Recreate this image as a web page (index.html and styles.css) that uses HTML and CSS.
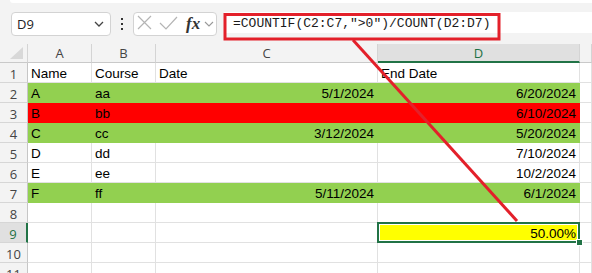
FILE: index.html
```html
<!DOCTYPE html>
<html>
<head>
    <title>Sheet</title>
    <link rel="stylesheet" href="styles.css">
</head>
<body>
    <div class="ribbon-edge"></div>
    <div class="formula-row">
        <div class="name-box">
            <span>D9</span>
            <svg class="chev" width="10" height="6" viewBox="0 0 10 6"><polyline points="1,1 5,5 9,1" /></svg>
        </div>
        <div class="dots">
            <svg width="4" height="14" viewBox="0 0 4 14"><rect x="1" y="1" width="2" height="2"/><rect x="1" y="6" width="2" height="2"/><rect x="1" y="11" width="2" height="2"/></svg>
        </div>
        <div class="fx-box">
            <svg class="edit-icons" width="48" height="22" viewBox="0 0 48 22">
                <path d="M4 3 L17 16 M17 3 L4 16" />
                <path d="M26 10 L32 16 L43 4" />
            </svg>
            <span class="fx">fx</span>
            <svg class="chev small" width="10" height="6" viewBox="0 0 10 6"><polyline points="1,1 5,5 9,1" /></svg>
        </div>
        <div class="formula">=COUNTIF(C2:C7,"&gt;0")/COUNT(D2:D7)</div>
    </div>

    <div class="sheet">
        <div class="hd corner">
            <svg width="14" height="13" viewBox="0 0 14 13"><polygon points="13,0 13,12 0,12" /></svg>
        </div>
        <div class="hd">A</div>
        <div class="hd">B</div>
        <div class="hd">C</div>
        <div class="hd sel">D</div>
        <div class="hd"></div>

        <div class="rh">1</div>
        <div class="cell">Name</div>
        <div class="cell">Course</div>
        <div class="cell">Date</div>
        <div class="cell">End Date</div>
        <div class="cell"></div>

        <div class="rh">2</div>
        <div class="cell g">A</div>
        <div class="cell g">aa</div>
        <div class="cell g num">5/1/2024</div>
        <div class="cell g num">6/20/2024</div>
        <div class="cell"></div>

        <div class="rh">3</div>
        <div class="cell r">B</div>
        <div class="cell r">bb</div>
        <div class="cell r num"></div>
        <div class="cell r num">6/10/2024</div>
        <div class="cell"></div>

        <div class="rh">4</div>
        <div class="cell g">C</div>
        <div class="cell g">cc</div>
        <div class="cell g num">3/12/2024</div>
        <div class="cell g num">5/20/2024</div>
        <div class="cell"></div>

        <div class="rh">5</div>
        <div class="cell">D</div>
        <div class="cell">dd</div>
        <div class="cell num"></div>
        <div class="cell num">7/10/2024</div>
        <div class="cell"></div>

        <div class="rh">6</div>
        <div class="cell">E</div>
        <div class="cell">ee</div>
        <div class="cell num"></div>
        <div class="cell num">10/2/2024</div>
        <div class="cell"></div>

        <div class="rh">7</div>
        <div class="cell g">F</div>
        <div class="cell g">ff</div>
        <div class="cell g num">5/11/2024</div>
        <div class="cell g num">6/1/2024</div>
        <div class="cell"></div>

        <div class="rh">8</div>
        <div class="cell"></div>
        <div class="cell"></div>
        <div class="cell"></div>
        <div class="cell"></div>
        <div class="cell"></div>

        <div class="rh sel">9</div>
        <div class="cell"></div>
        <div class="cell"></div>
        <div class="cell"></div>
        <div class="cell num active">50.00%</div>
        <div class="cell"></div>

        <div class="rh">10</div>
        <div class="cell"></div>
        <div class="cell"></div>
        <div class="cell"></div>
        <div class="cell"></div>
        <div class="cell"></div>

        <div class="rh">11</div>
        <div class="cell"></div>
        <div class="cell"></div>
        <div class="cell"></div>
        <div class="cell"></div>
        <div class="cell"></div>
    </div>

    <!-- annotation drawn over the sheet -->
    <svg class="callout" width="592" height="273" viewBox="0 0 592 273">
        <rect x="225" y="14.5" width="274" height="24.5" />
        <line x1="353" y1="40" x2="517" y2="221" />
    </svg>
</body>
</html>
```

FILE: styles.css
```css
body {
    margin: 0;
    width: 592px;
    height: 273px;
    overflow: hidden;
    background: #f3f3f3;
    font-family: "Open Sans", sans-serif;
    position: relative;
}
.ribbon-edge {
    height: 3px;
    margin-left: 10px;
    background: #fff;
    border-bottom-left-radius: 4px;
}
.formula-row {
    display: flex;
    align-items: flex-start;
    padding-top: 9px;
    height: 24px;
}
.name-box {
    box-sizing: border-box;
    margin-left: 11px;
    width: 100px;
    height: 24px;
    background: #fff;
    border: 1px solid #d3d3d3;
    border-radius: 4px;
    display: flex;
    align-items: center;
    justify-content: space-between;
    padding: 0 6px 0 5px;
    font-size: 13px;
    color: #222;
}
.chev polyline {
    fill: none;
    stroke: #444;
    stroke-width: 1.3;
}
.chev.small polyline {
    stroke: #999;
    stroke-width: 1.1;
}
.dots {
    width: 22px;
    height: 24px;
    display: flex;
    align-items: center;
    justify-content: center;
}
.dots rect {
    fill: #333;
}
.fx-box {
    box-sizing: border-box;
    width: 84px;
    height: 24px;
    background: #fff;
    border: 1px solid #d3d3d3;
    border-radius: 4px;
    display: flex;
    align-items: center;
}
.edit-icons path {
    fill: none;
    stroke: #b4b4b4;
    stroke-width: 1.2;
}
.fx {
    font-family: "Liberation Serif", serif;
    font-style: italic;
    font-weight: bold;
    font-size: 17px;
    color: #333;
    margin-left: 4px;
    margin-right: 4px;
    line-height: 22px;
}
.formula {
    margin-left: 7px;
    flex: 1;
    height: 21px;
    background: #fff;
    padding-left: 9px;
    font-family: "Liberation Mono", monospace;
    font-size: 13px;
    line-height: 23px;
    color: #1a1a1a;
    white-space: nowrap;
}
.sheet {
    margin-top: 8px;
    display: grid;
    grid-template-columns: 28px 64px 64px 222px 202px 12px;
    grid-template-rows: 19px;
    grid-auto-rows: 20px;
}
.hd {
    box-sizing: border-box;
    background: #f3f3f3;
    border-right: 1px solid #d4d4d4;
    border-bottom: 1px solid #c9c9c9;
    text-align: center;
    font-size: 13px;
    line-height: 19px;
    color: #444;
}
.hd.sel {
    background: #e0e0e0;
    color: #1e7145;
    border-bottom: 2px solid #217346;
}
.corner {
    display: flex;
    align-items: flex-end;
    justify-content: flex-end;
    padding: 0 3px 2px 0;
}
.corner polygon {
    fill: #d8d8d8;
}
.rh {
    box-sizing: border-box;
    background: #f3f3f3;
    border-right: 1px solid #c6c6c6;
    border-bottom: 1px solid #d6d6d6;
    text-align: center;
    font-size: 13px;
    line-height: 20px;
    padding-top: 1px;
    color: #444;
}
.rh.sel {
    background: #e0e0e0;
    color: #1e7145;
    border-right: 2px solid #217346;
}
.cell {
    box-sizing: border-box;
    background: #fff;
    border-right: 1px solid #e1e1e1;
    border-bottom: 1px solid #e1e1e1;
    padding: 1px 3px 0;
    font-family: "Liberation Sans", Arial, sans-serif;
    font-size: 13.5px;
    line-height: 20px;
    color: #000;
    white-space: nowrap;
}
.num {
    text-align: right;
}
.g {
    background: #92d050;
    border-color: #92d050;
}
.r {
    background: #ff0000;
    border-color: #ff0000;
}
.active {
    position: relative;
    background: #ffff00;
}
.active::after {
    content: "";
    position: absolute;
    top: -1px;
    left: -1px;
    right: -1px;
    bottom: -1px;
    border: 2px solid #217346;
    box-shadow: inset 0 0 0 1px #fff;
}
.active::before {
    content: "";
    position: absolute;
    right: -4px;
    bottom: -4px;
    width: 5px;
    height: 5px;
    background: #217346;
    border: 1px solid #fff;
    z-index: 1;
}
.callout {
    position: absolute;
    top: 0;
    left: 0;
    pointer-events: none;
}
.callout rect {
    fill: none;
    stroke: #e3202a;
    stroke-width: 3;
}
.callout line {
    stroke: #e3202a;
    stroke-width: 3;
}
```
